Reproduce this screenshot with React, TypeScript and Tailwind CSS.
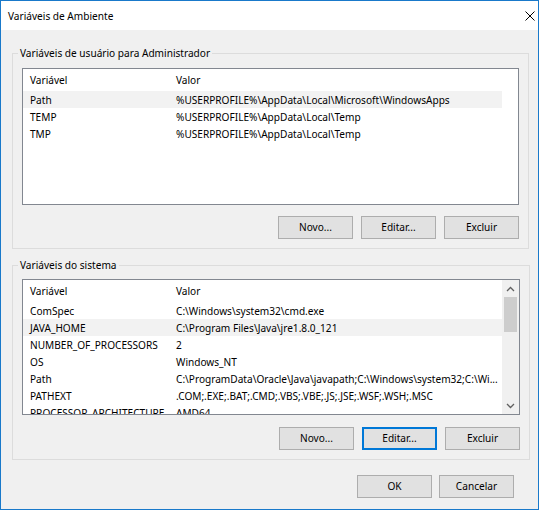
import React from 'react';

interface Row {
  name: string;
  value: string;
  hot?: boolean;
}

const userVars: Row[] = [
  { name: 'Path', value: '%USERPROFILE%\\AppData\\Local\\Microsoft\\WindowsApps', hot: true },
  { name: 'TEMP', value: '%USERPROFILE%\\AppData\\Local\\Temp' },
  { name: 'TMP', value: '%USERPROFILE%\\AppData\\Local\\Temp' },
];

const systemVars: Row[] = [
  { name: 'ComSpec', value: 'C:\\Windows\\system32\\cmd.exe' },
  { name: 'JAVA_HOME', value: 'C:\\Program Files\\Java\\jre1.8.0_121', hot: true },
  { name: 'NUMBER_OF_PROCESSORS', value: '2' },
  { name: 'OS', value: 'Windows_NT' },
  { name: 'Path', value: 'C:\\ProgramData\\Oracle\\Java\\javapath;C:\\Windows\\system32;C:\\Wi...' },
  { name: 'PATHEXT', value: '.COM;.EXE;.BAT;.CMD;.VBS;.VBE;.JS;.JSE;.WSF;.WSH;.MSC' },
  { name: 'PROCESSOR_ARCHITECTURE', value: 'AMD64' },
];

function Button({ label, focused }: { label: string; focused?: boolean }) {
  return (
    <button
      className={
        'w-[75px] h-[23px] bg-[#e1e1e1] text-[10.1px] leading-none text-black border ' +
        (focused ? 'border-[#0078d7] shadow-[inset_0_0_0_1px_#0078d7]' : 'border-[#adadad]')
      }
    >
      {label}
    </button>
  );
}

function ListView({ rows, height, scroll }: { rows: Row[]; height: string; scroll?: boolean }) {
  return (
    <div className={'flex bg-white border border-[#828790] overflow-hidden ' + height}>
      <div className="flex-1 min-w-0">
        <div className="flex h-[22px] items-center">
          <div className="w-[146px] pl-[7px]">Variável</div>
          <div className="pl-[7px]">Valor</div>
        </div>
        {rows.map((r) => (
          <div
            key={r.name}
            className={'flex h-[17px] items-center w-[479px] whitespace-nowrap ' + (r.hot ? 'bg-[#f2f2f2]' : '')}
          >
            <div className="w-[146px] pl-[7px] shrink-0">{r.name}</div>
            <div className="pl-[7px]">{r.value}</div>
          </div>
        ))}
      </div>
      {scroll && (
        <div className="w-[17px] shrink-0 bg-[#f0f0f0] flex flex-col items-center">
          <div className="h-[17px] flex items-center justify-center">
            <svg width="9" height="6" viewBox="0 0 9 6">
              <path d="M1 5 L4.5 1.5 L8 5" fill="none" stroke="#606060" strokeWidth="1.3" />
            </svg>
          </div>
          <div className="w-[13px] h-[35px] bg-[#cdcdcd]" />
          <div className="flex-1" />
          <div className="h-[17px] flex items-center justify-center">
            <svg width="9" height="6" viewBox="0 0 9 6">
              <path d="M1 1 L4.5 4.5 L8 1" fill="none" stroke="#606060" strokeWidth="1.3" />
            </svg>
          </div>
        </div>
      )}
    </div>
  );
}

export default function App() {
  return (
    <div
      className="w-[541px] h-[512px] bg-white text-[10.1px] leading-[14px] text-black"
      style={{ fontFamily: '"Noto Sans", "Liberation Sans", sans-serif' }}
    >
      <div className="w-[539px] h-[510px] border border-[#1979ca] flex flex-col">
        <div className="h-[29px] bg-white flex items-center justify-between pl-[7px] pr-[3px] shrink-0">
          <span>Variáveis de Ambiente</span>
          <svg width="10" height="10" viewBox="0 0 10 10">
            <path d="M0.5 0.5 L9.5 9.5 M9.5 0.5 L0.5 9.5" stroke="#000" strokeWidth="1" />
          </svg>
        </div>
        <div className="flex-1 bg-[#f0f0f0] pl-[11px] pr-[9px] pt-[15px]">
          <fieldset className="border border-[#dcdcdc] px-[9px] pb-[9px]">
            <legend className="ml-[-4px] px-[2px] leading-[16px]">Variáveis de usuário para Administrador</legend>
            <div className="mt-[7px]">
              <ListView rows={userVars} height="h-[137px]" />
            </div>
            <div className="flex justify-end gap-2 mt-[11px]">
              <Button label="Novo..." />
              <Button label="Editar..." />
              <Button label="Excluir" />
            </div>
          </fieldset>
          <fieldset className="border border-[#dcdcdc] px-[9px] pb-[9px] mt-[8px]">
            <legend className="ml-[-4px] px-[2px] leading-[16px]">Variáveis do sistema</legend>
            <div className="mt-[6px]">
              <ListView rows={systemVars} height="h-[136px]" scroll />
            </div>
            <div className="flex justify-end gap-2 mt-[12px]">
              <Button label="Novo..." />
              <Button label="Editar..." focused />
              <Button label="Excluir" />
            </div>
          </fieldset>
          <div className="flex justify-end gap-[7px] pr-[15px] mt-[15px]">
            <Button label="OK" />
            <Button label="Cancelar" />
          </div>
        </div>
      </div>
    </div>
  );
}
